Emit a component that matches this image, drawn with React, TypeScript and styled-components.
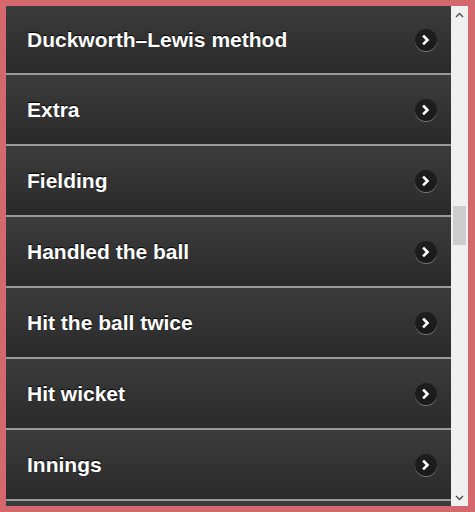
import React from "react";
import styled, { createGlobalStyle } from "styled-components";

const GlobalStyle = createGlobalStyle`
  html, body {
    margin: 0;
    padding: 0;
    width: 475px;
    height: 512px;
    overflow: hidden;
    background: #d5686c;
  }
  #root {
    width: 475px;
    height: 512px;
  }
`;

const Frame = styled.div`
  box-sizing: border-box;
  width: 475px;
  height: 512px;
  padding: 6px 7px 6px 6px;
  display: flex;
`;

const Viewport = styled.ul`
  flex: 1;
  margin: 0;
  padding: 0;
  list-style: none;
  overflow: hidden;
  background: #2b2b2b;
`;

const Row = styled.li<{ $first?: boolean }>`
  box-sizing: border-box;
  height: ${(p) => (p.$first ? "67px" : "71px")};
  display: flex;
  align-items: center;
  justify-content: space-between;
  padding: 0 14px 0 21px;
  border-top: ${(p) => (p.$first ? "none" : "2px solid #9a9a9a")};
  background: linear-gradient(#3c3c3c, #2a2a2a);
  cursor: pointer;
`;

const Label = styled.span`
  font-family: "Liberation Sans", Arial, sans-serif;
  font-weight: bold;
  font-size: 21px;
  color: #ffffff;
  text-shadow: 0 -1px 1px #000;
  white-space: nowrap;
`;

const Disc = styled.span`
  width: 22px;
  height: 22px;
  border-radius: 50%;
  background: rgba(0, 0, 0, 0.45);
  box-shadow: 0 1px 0 rgba(255, 255, 255, 0.35);
  display: flex;
  align-items: center;
  justify-content: center;
  flex-shrink: 0;
`;

const Scrollbar = styled.div`
  width: 17px;
  display: flex;
  flex-direction: column;
  background: #f0f0f0;
`;

const ScrollButton = styled.div`
  height: 17px;
  display: flex;
  align-items: center;
  justify-content: center;
  flex-shrink: 0;
`;

const Track = styled.div`
  flex: 1;
  display: flex;
  flex-direction: column;
  padding: 0 2px;
`;

const Thumb = styled.div`
  height: 39px;
  background: #cdcdcd;
  flex-shrink: 0;
`;

const terms = [
  "Appeal", "Arm ball", "Ashes", "Asking rate", "Average", "Back foot", "Bails",
  "Batsman", "Batting average", "Batting order", "Beamer", "Bouncer", "Boundary",
  "Bowled", "Bowler", "Bowling average", "Bye", "Captain", "Carrom ball", "Caught",
  "Century", "Chinaman", "Cover drive", "Crease", "Dead ball", "Declaration",
  "Delivery", "Dismissal", "Doosra", "Dot ball", "Double century", "Drinks break",
  "Duck", "Duckworth–Lewis method", "Extra", "Fielding", "Handled the ball",
  "Hit the ball twice", "Hit wicket", "Innings", "Leg before wicket", "Leg bye",
  "Leg spin", "Limited overs cricket", "Maiden over", "Man of the match",
  "Nightwatchman", "No ball", "Not out", "Obstructing the field", "Off spin",
  "One Day International", "Opening batsman", "Over", "Overthrow", "Partnership",
  "Pitch", "Powerplay", "Retired", "Reverse swing", "Run", "Run out", "Run rate",
  "Seam bowling", "Short leg", "Silly point", "Six", "Slip", "Spin bowling",
  "Stumped", "Stumps", "Super over", "Swing bowling", "Tail-ender", "Test cricket",
  "Third umpire", "Timed out", "Twenty20", "Umpire", "Wicket", "Wicket-keeper",
  "Wide", "Yorker", "Zooter",
];

const START = terms.indexOf("Duckworth–Lewis method");
const VISIBLE = 8;
const ROW_H = 71;
const VIEW_H = 500;
const TRACK_H = VIEW_H - 34;

const Chevron = () => (
  <svg width="12" height="12" viewBox="0 0 12 12">
    <path
      d="M4 2.5 L7.5 6 L4 9.5"
      fill="none"
      stroke="#fff"
      strokeWidth="2.6"
      strokeLinecap="square"
      strokeLinejoin="miter"
    />
  </svg>
);

const Arrow = ({ up }: { up?: boolean }) => (
  <svg width="9" height="6" viewBox="0 0 9 6">
    <path
      d={up ? "M1 5 L4.5 1.5 L8 5" : "M1 1 L4.5 4.5 L8 1"}
      fill="none"
      stroke="#505050"
      strokeWidth="1.4"
    />
  </svg>
);

export default function App() {
  const contentH = terms.length * ROW_H;
  const thumbOffset =
    ((START * ROW_H) / (contentH - VIEW_H)) * (TRACK_H - 39);
  const shown = terms.slice(START, START + VISIBLE);

  return (
    <>
      <GlobalStyle />
      <Frame>
        <Viewport>
          {shown.map((t, i) => (
            <Row key={t} $first={i === 0}>
              <Label>{t}</Label>
              <Disc>
                <Chevron />
              </Disc>
            </Row>
          ))}
        </Viewport>
        <Scrollbar>
          <ScrollButton>
            <Arrow up />
          </ScrollButton>
          <Track>
            <Thumb style={{ marginTop: thumbOffset }} />
          </Track>
          <ScrollButton>
            <Arrow />
          </ScrollButton>
        </Scrollbar>
      </Frame>
    </>
  );
}
